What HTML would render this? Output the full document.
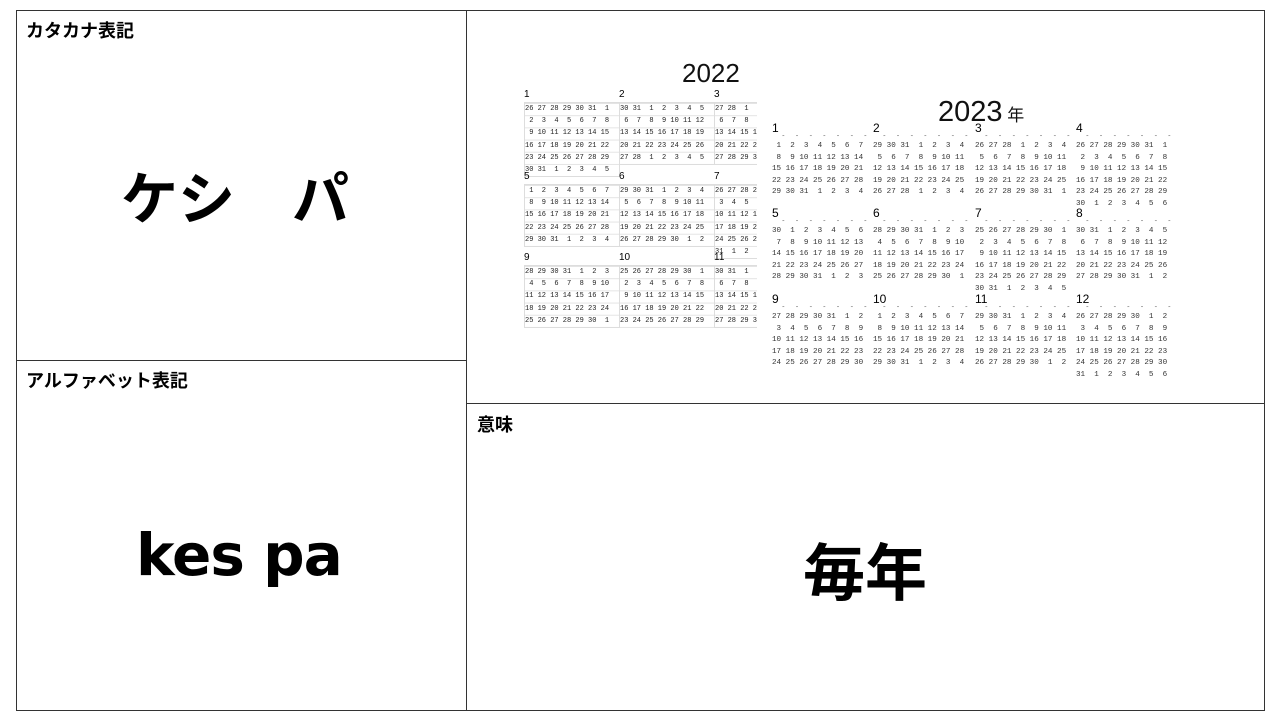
<!DOCTYPE html>
<html><head><meta charset="utf-8"><style>
body{margin:0;width:1280px;height:720px;background:#fff;position:relative;overflow:hidden;font-family:"Liberation Sans","Noto Sans CJK JP",sans-serif}
.b{position:absolute;border:1px solid #333;box-sizing:border-box}
.lbl{position:absolute;font-weight:bold;font-size:18px;color:#000}
.big{position:absolute;font-weight:bold;color:#000;white-space:pre;line-height:1}
.m{position:absolute;font-family:"Liberation Mono",monospace;font-size:7.6px;line-height:11.5px;white-space:pre;color:#333}
.m b{display:block;font-weight:normal;font-size:12px;color:#000;line-height:14px;font-family:"Liberation Sans",sans-serif}
.m i{display:block;font-style:normal;line-height:6px;height:6px;overflow:hidden;color:#555}
.g{position:absolute;font-family:"Liberation Mono",monospace;font-size:7px;line-height:12.2px;white-space:pre;color:#222;border:1px solid #ddd;background-image:linear-gradient(#e4e4e4 1px,transparent 1px);background-size:100% 12.2px}
.h{position:absolute;font-size:10px;color:#000}
</style></head><body>
<div class="b" style="left:16px;top:10px;width:1249px;height:701px"></div>
<div class="b" style="left:466px;top:10px;width:1px;height:701px;border-width:0 0 0 1px"></div>
<div class="b" style="left:16px;top:360px;width:451px;height:1px;border-width:1px 0 0 0"></div>
<div class="b" style="left:466px;top:403px;width:799px;height:1px;border-width:1px 0 0 0"></div>

<div class="lbl" style="left:26px;top:17px">カタカナ表記</div>
<div class="lbl" style="left:26px;top:367px">アルファベット表記</div>
<div class="lbl" style="left:477px;top:411px">意味</div>

<div class="big" style="left:121px;top:172px;font-size:57px">ケシ　パ</div>
<div class="big" style="left:136px;top:526px;font-size:58px;font-family:'DejaVu Sans',sans-serif;font-weight:bold;letter-spacing:-1px">kes pa</div>
<div class="big" style="left:803px;top:544px;font-size:62px">毎年</div>

<div style="position:absolute;left:682px;top:58px;font-size:26px;color:#111">2022</div>
<div style="position:absolute;left:938px;top:96px;font-size:29px;color:#111">2023<span style="font-size:17px"> 年</span></div>

<div style="position:absolute;left:510px;top:88px;width:247px;height:240px;overflow:hidden">
<div class="h" style="left:14px;top:1px">1</div><div class="h" style="left:109px;top:1px">2</div><div class="h" style="left:204px;top:1px">3</div>
<div class="g" style="left:14px;top:14px;width:94px">26 27 28 29 30 31  1
 2  3  4  5  6  7  8
 9 10 11 12 13 14 15
16 17 18 19 20 21 22
23 24 25 26 27 28 29
30 31  1  2  3  4  5</div>
<div class="g" style="left:109px;top:14px;width:94px">30 31  1  2  3  4  5
 6  7  8  9 10 11 12
13 14 15 16 17 18 19
20 21 22 23 24 25 26
27 28  1  2  3  4  5</div>
<div class="g" style="left:204px;top:14px;width:94px">27 28  1  2  3  4  5
 6  7  8  9 10 11 12
13 14 15 16 17 18 19
20 21 22 23 24 25 26
27 28 29 30 31  1  2</div>
<div class="h" style="left:14px;top:83px">5</div><div class="h" style="left:109px;top:83px">6</div><div class="h" style="left:204px;top:83px">7</div>
<div class="g" style="left:14px;top:96px;width:94px"> 1  2  3  4  5  6  7
 8  9 10 11 12 13 14
15 16 17 18 19 20 21
22 23 24 25 26 27 28
29 30 31  1  2  3  4</div>
<div class="g" style="left:109px;top:96px;width:94px">29 30 31  1  2  3  4
 5  6  7  8  9 10 11
12 13 14 15 16 17 18
19 20 21 22 23 24 25
26 27 28 29 30  1  2</div>
<div class="g" style="left:204px;top:96px;width:94px">26 27 28 29 30  1  2
 3  4  5  6  7  8  9
10 11 12 13 14 15 16
17 18 19 20 21 22 23
24 25 26 27 28 29 30
31  1  2  3  4  5  6</div>
<div class="h" style="left:14px;top:164px">9</div><div class="h" style="left:109px;top:164px">10</div><div class="h" style="left:204px;top:164px">11</div>
<div class="g" style="left:14px;top:177px;width:94px">28 29 30 31  1  2  3
 4  5  6  7  8  9 10
11 12 13 14 15 16 17
18 19 20 21 22 23 24
25 26 27 28 29 30  1</div>
<div class="g" style="left:109px;top:177px;width:94px">25 26 27 28 29 30  1
 2  3  4  5  6  7  8
 9 10 11 12 13 14 15
16 17 18 19 20 21 22
23 24 25 26 27 28 29
30 31  1  2  3  4  5</div>
<div class="g" style="left:204px;top:177px;width:94px">30 31  1  2  3  4  5
 6  7  8  9 10 11 12
13 14 15 16 17 18 19
20 21 22 23 24 25 26
27 28 29 30  1  2  3</div>
</div>

<div class="m" style="left:772px;top:121px"><b>1</b><i>  *  *  *  *  *  *  *</i> 1  2  3  4  5  6  7
 8  9 10 11 12 13 14
15 16 17 18 19 20 21
22 23 24 25 26 27 28
29 30 31  1  2  3  4</div>
<div class="m" style="left:873px;top:121px"><b>2</b><i>  *  *  *  *  *  *  *</i>29 30 31  1  2  3  4
 5  6  7  8  9 10 11
12 13 14 15 16 17 18
19 20 21 22 23 24 25
26 27 28  1  2  3  4</div>
<div class="m" style="left:975px;top:121px"><b>3</b><i>  *  *  *  *  *  *  *</i>26 27 28  1  2  3  4
 5  6  7  8  9 10 11
12 13 14 15 16 17 18
19 20 21 22 23 24 25
26 27 28 29 30 31  1</div>
<div class="m" style="left:1076px;top:121px"><b>4</b><i>  *  *  *  *  *  *  *</i>26 27 28 29 30 31  1
 2  3  4  5  6  7  8
 9 10 11 12 13 14 15
16 17 18 19 20 21 22
23 24 25 26 27 28 29
30  1  2  3  4  5  6</div>
<div class="m" style="left:772px;top:206px"><b>5</b><i>  *  *  *  *  *  *  *</i>30  1  2  3  4  5  6
 7  8  9 10 11 12 13
14 15 16 17 18 19 20
21 22 23 24 25 26 27
28 29 30 31  1  2  3</div>
<div class="m" style="left:873px;top:206px"><b>6</b><i>  *  *  *  *  *  *  *</i>28 29 30 31  1  2  3
 4  5  6  7  8  9 10
11 12 13 14 15 16 17
18 19 20 21 22 23 24
25 26 27 28 29 30  1</div>
<div class="m" style="left:975px;top:206px"><b>7</b><i>  *  *  *  *  *  *  *</i>25 26 27 28 29 30  1
 2  3  4  5  6  7  8
 9 10 11 12 13 14 15
16 17 18 19 20 21 22
23 24 25 26 27 28 29
30 31  1  2  3  4  5</div>
<div class="m" style="left:1076px;top:206px"><b>8</b><i>  *  *  *  *  *  *  *</i>30 31  1  2  3  4  5
 6  7  8  9 10 11 12
13 14 15 16 17 18 19
20 21 22 23 24 25 26
27 28 29 30 31  1  2</div>
<div class="m" style="left:772px;top:292px"><b>9</b><i>  *  *  *  *  *  *  *</i>27 28 29 30 31  1  2
 3  4  5  6  7  8  9
10 11 12 13 14 15 16
17 18 19 20 21 22 23
24 25 26 27 28 29 30</div>
<div class="m" style="left:873px;top:292px"><b>10</b><i>  *  *  *  *  *  *  *</i> 1  2  3  4  5  6  7
 8  9 10 11 12 13 14
15 16 17 18 19 20 21
22 23 24 25 26 27 28
29 30 31  1  2  3  4</div>
<div class="m" style="left:975px;top:292px"><b>11</b><i>  *  *  *  *  *  *  *</i>29 30 31  1  2  3  4
 5  6  7  8  9 10 11
12 13 14 15 16 17 18
19 20 21 22 23 24 25
26 27 28 29 30  1  2</div>
<div class="m" style="left:1076px;top:292px"><b>12</b><i>  *  *  *  *  *  *  *</i>26 27 28 29 30  1  2
 3  4  5  6  7  8  9
10 11 12 13 14 15 16
17 18 19 20 21 22 23
24 25 26 27 28 29 30
31  1  2  3  4  5  6</div>
</body></html>
